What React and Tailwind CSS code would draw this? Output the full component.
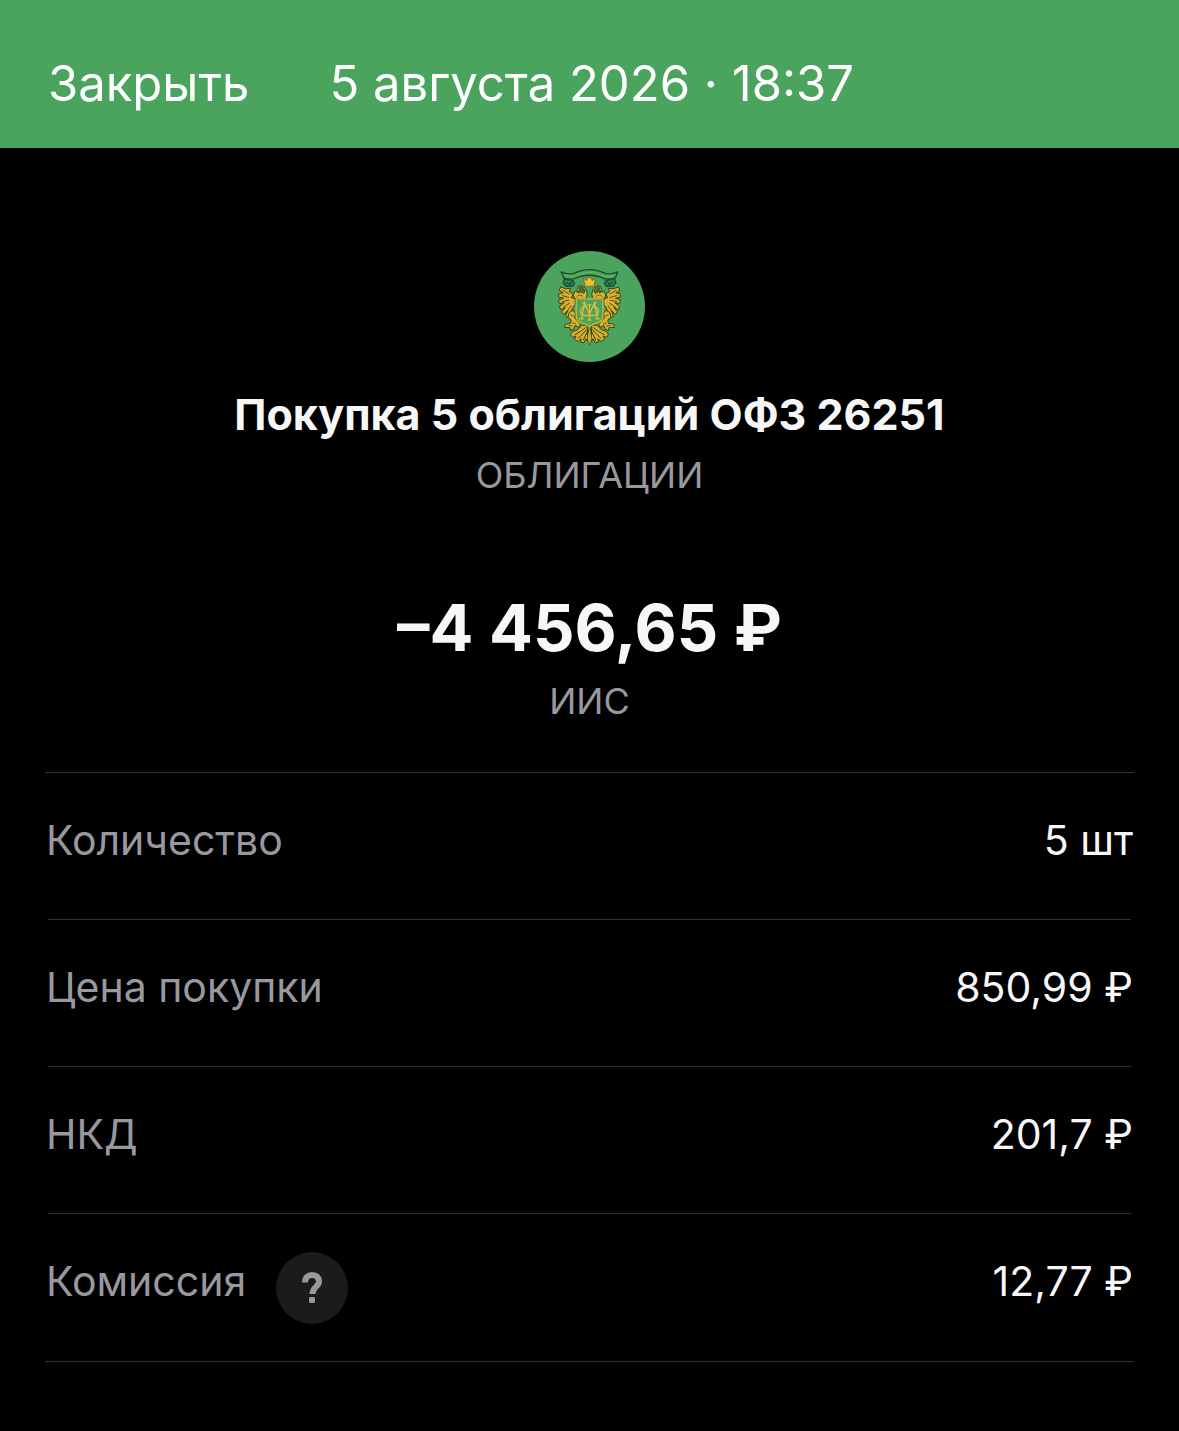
const rows = [
  { label: 'Количество', value: '5 шт' },
  { label: 'Цена покупки', value: '850,99 ₽' },
  { label: 'НКД', value: '201,7 ₽' },
  { label: 'Комиссия', value: '12,77 ₽', help: true },
]

// One half of the eagle, the other half is the same thing mirrored
function EagleHalf() {
  return (
    <g stroke="#344418" strokeWidth="3" strokeLinejoin="round">
      {/* wing */}
      <path
        fill="#dcb02e"
        d="M152 172 L140 168 L146 158 L134 150 L138 140 L124 142 L108 136 L104 146 L116 154 L103 156 L102 167 L117 170 L102 175 L104 186 L119 184 L105 194 L108 205 L122 198 L111 211 L117 219 L129 208 L123 224 L131 229 L140 212 L146 196 L152 190 Z"
      />
      <path fill="none" strokeWidth="2.5" d="M114 145 L134 158 M112 162 L134 168 M112 180 L134 176 M116 198 L136 184 M126 212 L140 192" />
      {/* head and neck */}
      <path
        fill="#dcb02e"
        d="M186 172 L150 172 L146 160 L152 149 L166 154 L158 144 L162 134 L174 133 L184 142 L188 156 Z"
      />
      <path fill="#2d7a42" strokeWidth="2" d="M163 139 L174 136 L182 148 L178 156 L166 150 Z" />
      <path fill="none" strokeWidth="2" d="M156 166 L164 160 L176 164" />
      {/* leg */}
      <path
        fill="#dcb02e"
        d="M134 213 L146 206 L153 216 L150 228 L160 240 L168 248 L162 258 L152 252 L148 262 L138 268 L136 258 L120 258 L122 248 L138 246 L140 236 L130 228 Z"
      />
      <path fill="none" strokeWidth="2.5" d="M138 220 L147 224 M144 244 L154 248 M132 252 L144 254" />
      {/* tail feathers */}
      <path
        fill="#dcb02e"
        d="M188 250 L172 252 L158 266 L144 270 L138 280 L144 288 L154 284 L150 294 L160 300 L170 292 L168 302 L178 304 L184 292 L190 300 Z"
      />
      <path fill="none" strokeWidth="3" d="M184 258 L168 270 L150 280 M187 264 L172 280 L160 291 M191 266 L182 284 L176 297" />
    </g>
  )
}

function Emblem() {
  return (
    <svg viewBox="28 28 334 334" className="size-[111px]" aria-hidden="true">
      <circle cx="195" cy="195" r="167" fill="#4aa45e" />
      <EagleHalf />
      <g transform="matrix(-1 0 0 1 390 0)">
        <EagleHalf />
      </g>
      {/* ribbon */}
      <g stroke="#174f35" strokeWidth="4" strokeLinejoin="round">
        <path fill="#2d8450" d="M119 112 L116 124 L124 134 L144 134 L150 126 L146 117 Z" />
        <path fill="#2d8450" d="M271 112 L274 124 L266 134 L246 134 L240 126 L244 117 Z" />
        <path fill="none" d="M124 122 L136 128 L142 120 M266 122 L254 128 L248 120" />
        <path
          fill="#4aa45e"
          d="M110 91 Q128 99 146 96 Q172 84 195 84 Q218 84 244 96 Q262 99 280 91 L273 108 Q258 116 240 111 Q216 101 195 101 Q174 101 150 111 Q132 116 117 108 Z"
        />
        <path
          fill="none"
          stroke="#8db54a"
          strokeWidth="4"
          strokeDasharray="3 2"
          d="M122 103 Q138 107 150 103 Q174 92 195 92 Q216 92 240 103 Q252 107 268 103"
        />
      </g>
      {/* crown */}
      <path
        fill="#f2c02e"
        stroke="#6b5a1c"
        strokeWidth="2"
        strokeLinejoin="round"
        d="M182 134 L177 110 L187 117 L191 104 L195 111 L199 104 L203 117 L213 110 L208 134 Z"
      />
      {/* tail spine */}
      <path fill="#dcb02e" stroke="#344418" strokeWidth="2" d="M195 252 L202 292 L195 311 L188 292 Z" />
      {/* shield */}
      <path
        fill="#4aa45e"
        stroke="#d8b235"
        strokeWidth="4"
        d="M155 172 H235 V222 Q235 240 218 244 Q202 247 195 256 Q188 247 172 244 Q155 240 155 222 Z"
      />
      {/* monogram */}
      <g fill="none" stroke="#dfbd3b" strokeWidth="4">
        <path d="M164 232 H178 M171 232 L180 184 L195 218 L210 184 L219 232 M212 232 H226 M173 184 H182 M208 184 H217" />
        <path d="M195 190 V236 M189 236 H201 M189 190 H201" />
        <path d="M186 196 Q168 196 168 209 Q168 222 186 222 H204 Q222 222 222 209 Q222 196 204 196" />
      </g>
    </svg>
  )
}

function Row({ label, value, help }) {
  return (
    <div className="grid min-h-[147px] grid-cols-[1fr_auto] content-between items-start px-px pt-[38px] text-[41px] leading-[58px] after:col-span-2 after:mx-0.5 after:h-px after:bg-[#303032] last:after:hidden">
      <dt className="flex items-start gap-[30px] text-[#98989f]">
        {label}
        {help && (
          <button
            type="button"
            aria-label="Подробнее о комиссии"
            className="flex size-[72px] items-center justify-center rounded-full bg-[#1b1b1c]"
          >
            <svg viewBox="0 0 24 36" className="h-9 w-6" fill="none" aria-hidden="true">
              <path d="M5 12.500 C5 7.500 8 5 12 5 C16.500 5 19 7.500 19 11.500 C19 17 12.500 16.500 12.500 24" stroke="#98989f" strokeWidth="6" />
              <rect x="9" y="27" width="6" height="6" rx="1.500" fill="#98989f" />
            </svg>
          </button>
        )}
      </dt>
      <dd className="text-[#f7f7f8]">{value}</dd>
    </div>
  )
}

export default function App() {
  return (
    <div className="min-h-screen bg-black font-['Inter',sans-serif]">
      {/* Header */}
      <header className="flex items-center gap-20 bg-[#4aa45e] px-12 pt-[52px] pb-8 text-[49px] leading-[64px] text-white">
        <button type="button">Закрыть</button>
        <time dateTime="2026-08-05T18:37">5 августа 2026 · 18:37</time>
      </header>

      <main className="px-[45px]">
        {/* Operation summary */}
        <section className="flex flex-col items-center pt-[103px] pb-[45px] text-center">
          <Emblem />
          <h1 className="mt-6 text-[43px] leading-[56px] font-bold text-[#f7f7f8]">
            Покупка 5 облигаций ОФЗ 26251
          </h1>
          <p className="mt-[7px] text-[36px] leading-[52px] text-[#98989f]">ОБЛИГАЦИИ</p>
          <p className="mt-[87px] text-[65px] leading-[80px] font-bold text-[#f7f7f8]">–4 456,65 ₽</p>
          <p className="mt-[7px] text-[36px] leading-[52px] text-[#98989f]">ИИС</p>
        </section>

        {/* Details */}
        <dl className="border-y border-[#303032]">
          {rows.map((row) => (
            <Row key={row.label} {...row} />
          ))}
        </dl>
      </main>
    </div>
  )
}
